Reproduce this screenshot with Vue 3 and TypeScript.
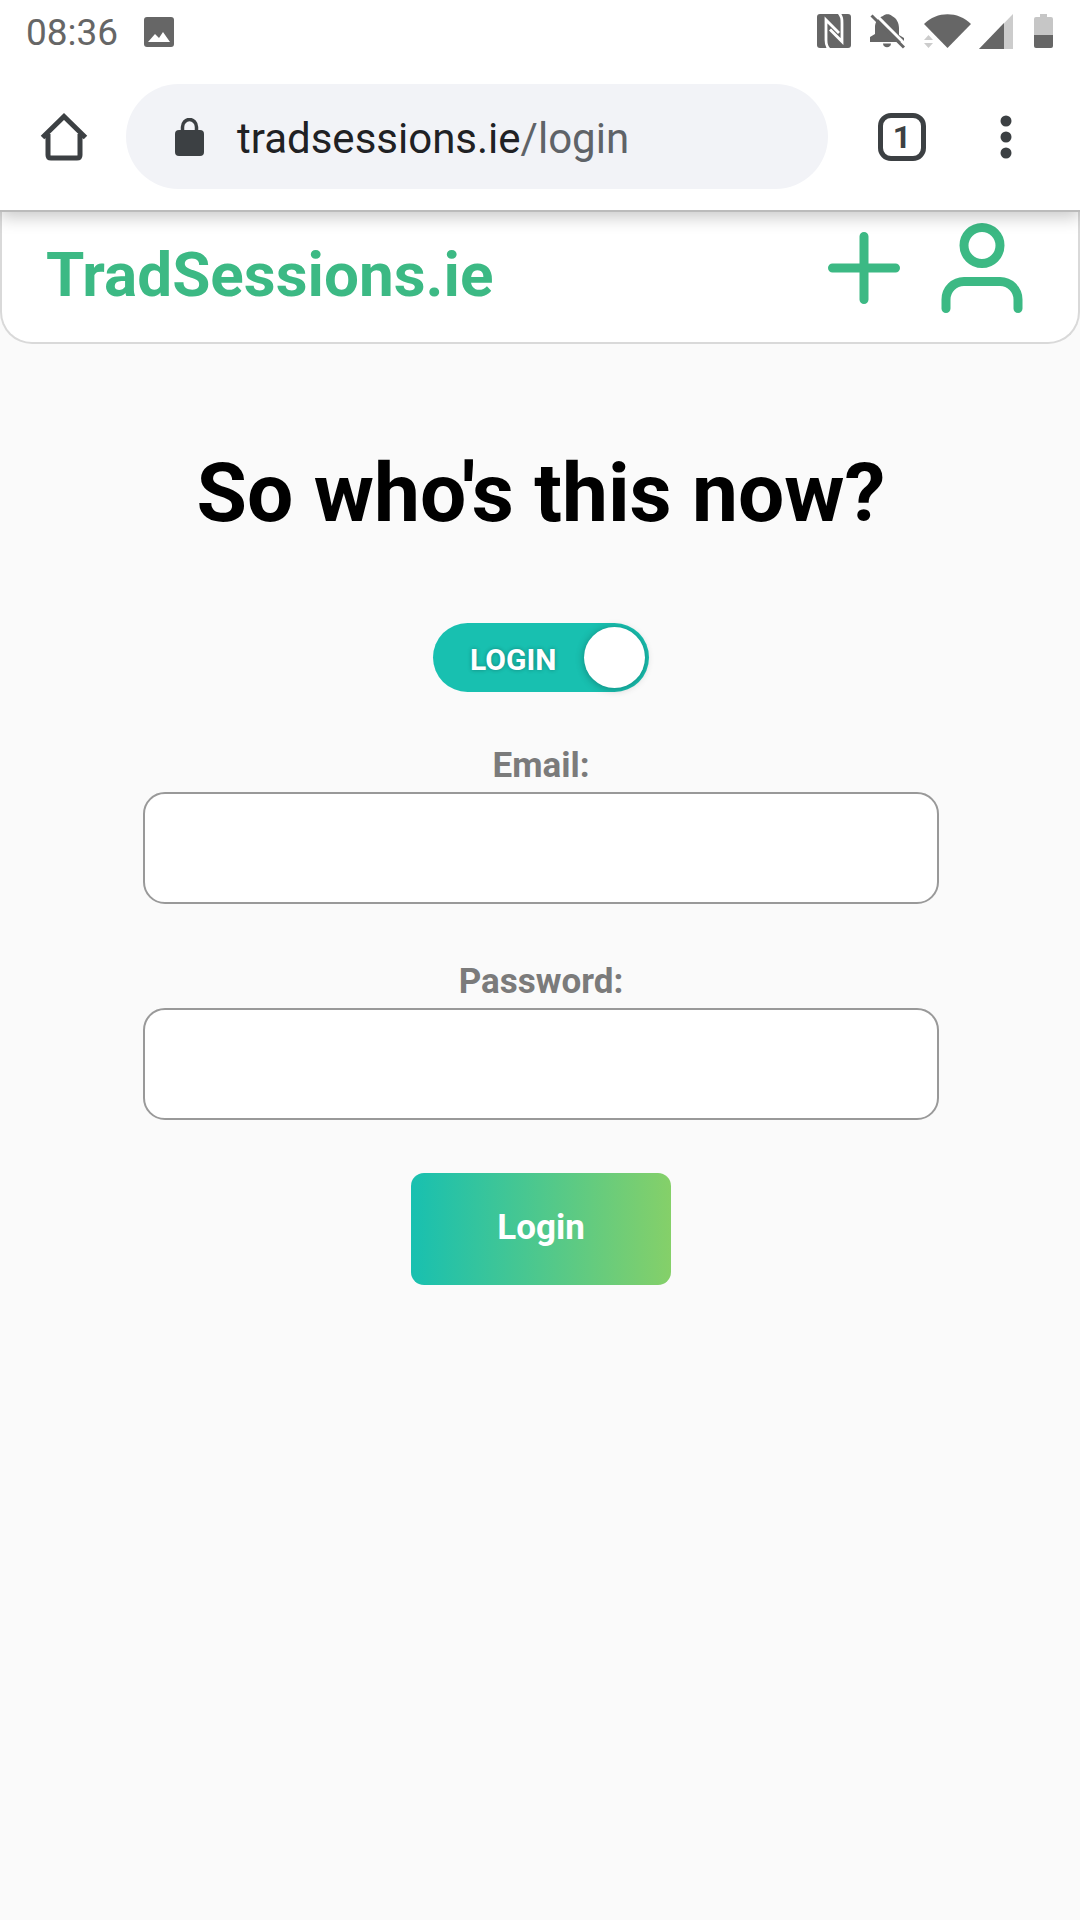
<script setup lang="ts">
import { computed, ref } from 'vue'

const isLogin = ref(true)
const email = ref('')
const password = ref('')

const modeLabel = computed(() => (isLogin.value ? 'LOGIN' : 'SIGN UP'))
const submitLabel = computed(() => (isLogin.value ? 'Login' : 'Sign up'))
</script>

<template>
  <div class="screen">
    <div class="status-bar">
      <div class="status-left">
        <span class="clock">08:36</span>
        <svg class="picture-icon" viewBox="0 0 30 30" aria-hidden="true">
          <rect width="30" height="30" rx="3" fill="#666" />
          <path d="M4 25 11 17 15 21 19 15 26 25Z" fill="#fff" />
        </svg>
      </div>
      <div class="status-right">
        <svg width="34" height="34" viewBox="0 0 34 34" aria-hidden="true">
          <rect width="34" height="34" rx="3" fill="#666" />
          <path
            d="M12 35C9 32 9 29 9 26V6L22 19M22 -1C25 3 25 5 25 9V27.500L13 15.500"
            fill="none"
            stroke="#fff"
            stroke-width="2.800"
          />
        </svg>
        <svg class="bell" width="35" height="35" viewBox="0 0 35 35" aria-hidden="true">
          <path
            d="M13 2C15 -.5 20 -.5 22 2C26.500 4 29 9 29 14V21L34 24V28H0V23L5 20V13C5 8 8 4 13 2Z"
            fill="#666"
          />
          <path d="M13 29.500H21C21 34.500 13 34.500 13 29.500Z" fill="#666" />
          <path d="M4 -1 37 32" stroke="#fff" stroke-width="3" />
          <path d="M1.500 1.500 34 33.500" stroke="#666" stroke-width="3" />
        </svg>
        <svg class="wifi" width="47" height="34" viewBox="0 0 47 34" aria-hidden="true">
          <path d="M0 10C13-3 34-3 47 10L23.500 34Z" fill="#666" />
          <path d="M0 26H9L4.500 21ZM0 29H9L4.500 34Z" fill="#ccc" />
        </svg>
        <svg class="signal" width="34" height="35" viewBox="0 0 34 35" aria-hidden="true">
          <path d="M0 35 34 0V35Z" fill="#ccc" />
          <path d="M0 35 25 9V35Z" fill="#666" />
        </svg>
        <svg class="battery" width="19" height="34" viewBox="0 0 19 34" aria-hidden="true">
          <path d="M6 0H13V3H17Q19 3 19 5V21H0V5Q0 3 2 3H6Z" fill="#c6c6c6" />
          <path d="M0 21H19V32Q19 34 17 34H2Q0 34 0 32Z" fill="#666" />
        </svg>
      </div>
    </div>

    <div class="toolbar">
      <button type="button" class="tool" aria-label="Home">
        <svg width="48" height="48" viewBox="0 0 48 48" aria-hidden="true">
          <path
            d="M2.500 24.500 24 3.500 45.500 24.500M8 21V42Q8 45 11 45H37Q40 45 40 42V21"
            fill="none"
            stroke="#3c4043"
            stroke-width="5"
          />
        </svg>
      </button>
      <button type="button" class="address">
        <svg width="29" height="38" viewBox="0 0 29 38" aria-hidden="true">
          <rect y="12" width="29" height="26" rx="4" fill="#3c4043" />
          <path d="M7.500 14V9A7 7.500 0 0 1 21.500 9V14" fill="none" stroke="#3c4043" stroke-width="3.500" />
        </svg>
        <span class="url">tradsessions.ie<span class="path">/login</span></span>
      </button>
      <button type="button" class="tabs" aria-label="Open tabs">1</button>
      <button type="button" class="tool" aria-label="Menu">
        <svg width="12" height="44" viewBox="0 0 12 44" fill="#3c4043" aria-hidden="true">
          <circle cx="6" cy="6" r="5.500" />
          <circle cx="6" cy="22" r="5.500" />
          <circle cx="6" cy="38" r="5.500" />
        </svg>
      </button>
    </div>

    <header class="site-header">
      <a href="#" class="brand">TradSessions.ie</a>
      <nav class="actions">
        <a href="#" aria-label="Add session">
          <svg class="line-icon" viewBox="0 0 24 24" aria-hidden="true">
            <path d="M12 5v14M5 12h14" />
          </svg>
        </a>
        <a href="#" aria-label="Account">
          <svg class="line-icon" viewBox="0 0 24 24" aria-hidden="true">
            <path d="M20 21v-2a4 4 0 0 0-4-4H8a4 4 0 0 0-4 4v2" />
            <circle cx="12" cy="7" r="4" />
          </svg>
        </a>
      </nav>
    </header>

    <main>
      <h1>So who's this now?</h1>
      <label class="switch">
        <input v-model="isLogin" type="checkbox" />
        <span class="switch-text">{{ modeLabel }}</span>
        <span class="knob"></span>
      </label>
      <form @submit.prevent>
        <div class="field">
          <label for="email">Email:</label>
          <input id="email" v-model="email" type="email" />
        </div>
        <div class="field">
          <label for="password">Password:</label>
          <input id="password" v-model="password" type="password" />
        </div>
        <button type="submit" class="submit">{{ submitLabel }}</button>
      </form>
    </main>
  </div>
</template>

<style>
body {
  margin: 0;
  background: #fafafa;
}
</style>

<style scoped>
.screen {
  min-height: 100vh;
  background: #fafafa;
  font-family: Roboto, 'Liberation Sans', sans-serif;
}

.screen,
.screen * {
  box-sizing: border-box;
}

svg {
  display: block;
  flex: none;
}

button {
  padding: 0;
  border: 0;
  background: none;
  font-family: inherit;
}

.status-bar {
  position: relative;
  z-index: 2;
  display: flex;
  justify-content: space-between;
  height: 52px;
  padding: 0 27px 0 26px;
  background: #fff;
}

.status-left {
  display: flex;
  align-items: center;
  gap: 26px;
  padding-top: 12px;
}

.clock {
  padding-top: 2px;
  font-size: 37px;
  line-height: 40px;
  color: #666;
}

.picture-icon {
  width: 30px;
  height: 30px;
}

.status-right {
  display: flex;
  align-items: flex-start;
  padding-top: 14px;
}

.bell {
  margin-left: 19px;
}

.wifi {
  margin-left: 19px;
}

.signal {
  margin-left: 8px;
}

.battery {
  margin-left: 21px;
}

.toolbar {
  position: relative;
  display: flex;
  align-items: center;
  padding: 32px 68px 21px 40px;
  border-bottom: 2px solid #bbb;
  background: #fff;
  box-shadow: 0 5px 16px rgba(0, 0, 0, 0.22);
}

.address {
  display: flex;
  flex: 1;
  align-items: center;
  gap: 33px;
  height: 105px;
  margin: 0 50px 0 38px;
  padding: 0 49px;
  border-radius: 53px;
  background: #f2f3f7;
}

.url {
  padding-top: 4px;
  font-size: 42px;
  line-height: 50px;
  color: #202124;
}

.path {
  color: #5f6368;
}

.tabs {
  width: 48px;
  height: 48px;
  margin-right: 74px;
  border: 5px solid #3c4043;
  border-radius: 13px;
  font-size: 32px;
  font-weight: 700;
  line-height: 38px;
  color: #3c4043;
}

.site-header {
  display: flex;
  align-items: center;
  justify-content: space-between;
  padding: 2px 42px 20px 44px;
  border: 2px solid #d9d9d9;
  border-top: 0;
  border-radius: 0 0 32px 32px;
  background: #fff;
}

.brand {
  padding-top: 14px;
  font-size: 62px;
  font-weight: 700;
  line-height: 76px;
  color: #3cb984;
  text-decoration: none;
}

.actions {
  display: flex;
  gap: 10px;
}

.line-icon {
  width: 108px;
  height: 108px;
  fill: none;
  stroke: #3cb984;
  stroke-width: 2;
  stroke-linecap: round;
  stroke-linejoin: round;
}

main {
  display: flex;
  flex-direction: column;
  align-items: center;
  padding: 102px 141px 102px 143px;
}

h1 {
  margin: 0;
  font-size: 82px;
  font-weight: 700;
  line-height: 94px;
  color: #000;
}

.switch {
  position: relative;
  display: flex;
  align-items: center;
  justify-content: space-between;
  width: 216px;
  height: 69px;
  margin: 83px 0 54px;
  padding: 0 4px 0 37px;
  border-radius: 35px;
  background: #18c0b0;
}

.switch input {
  position: absolute;
  inset: 0;
  width: 100%;
  height: 100%;
  margin: 0;
  opacity: 0;
}

.switch-text {
  padding-top: 4px;
  font-size: 30px;
  font-weight: 700;
  line-height: 36px;
  color: #fff;
  text-shadow: 0 0 4px rgba(0, 0, 0, 0.3);
}

.knob {
  width: 61px;
  height: 61px;
  border-radius: 50%;
  background: #fff;
  box-shadow: 0 1px 8px rgba(0, 0, 0, 0.3);
}

form {
  display: flex;
  flex-direction: column;
  align-items: center;
  align-self: stretch;
}

.field {
  display: flex;
  flex-direction: column;
  gap: 6px;
  width: 100%;
  margin-bottom: 58px;
}

.field label {
  font-size: 35px;
  font-weight: 700;
  line-height: 40px;
  text-align: center;
  color: #7b7b7b;
}

.field input {
  width: 100%;
  height: 112px;
  padding: 0 24px;
  border: 2px solid #999;
  border-radius: 22px;
  background: #fff;
  font-family: inherit;
  font-size: 35px;
}

.field:nth-child(2) {
  margin-bottom: 53px;
}

.submit {
  width: 260px;
  height: 112px;
  padding-bottom: 4px;
  border-radius: 13px;
  background: linear-gradient(90deg, #18c0b0, #85d069);
  font-size: 35px;
  font-weight: 700;
  color: #fff;
}
</style>
